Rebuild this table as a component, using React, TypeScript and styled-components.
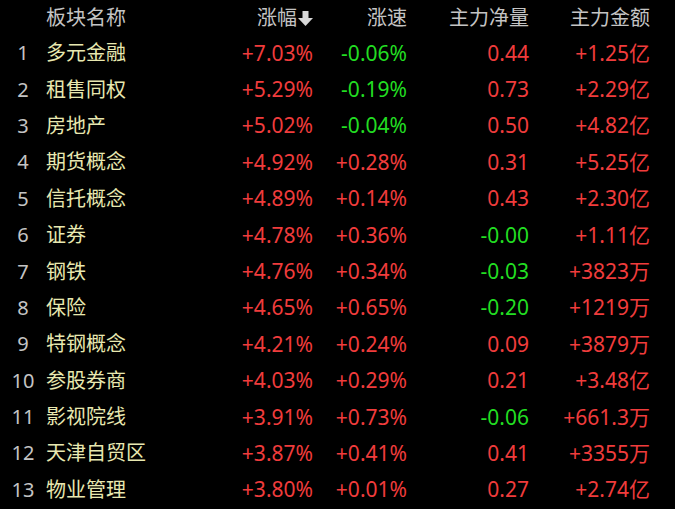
import styled, { createGlobalStyle } from "styled-components";

const GlobalStyle = createGlobalStyle`
  html, body {
    margin: 0;
    padding: 0;
    background: #000;
  }
`;

const Board = styled.div`
  width: 675px;
  height: 509px;
  overflow: hidden;
  background: #000;
  font-family: "Noto Sans", "Noto Sans CJK SC", sans-serif;
  font-size: 20px;
  padding: 1px 25px 0 0;
  box-sizing: border-box;
`;

const Row = styled.div<{ $head?: boolean }>`
  display: grid;
  grid-template-columns: 46px 181px 86px 94px 122px 121px;
  align-items: center;
  height: ${(p) => (p.$head ? "34px" : "36.4px")};
  line-height: 1;
  white-space: nowrap;
`;

const Index = styled.span`
  text-align: center;
  color: #c4c4c4;
`;

const Name = styled.span<{ $head?: boolean }>`
  color: ${(p) => (p.$head ? "#c4c4c4" : "#e8e8b0")};
`;

const Cell = styled.span<{ $tone?: "up" | "down" | "head" }>`
  text-align: right;
  font-size: ${(p) => (p.$tone === "head" ? "20px" : "21px")};
  color: ${(p) =>
    p.$tone === "up" ? "#f03c3c" : p.$tone === "down" ? "#22dd22" : "#c4c4c4"};
`;

const SortArrow = styled.svg`
  width: 15px;
  height: 15px;
  margin-left: 1px;
  vertical-align: -1px;
`;

type Item = [string, string, string, string, string];

const rows: Item[] = [
  ["多元金融", "+7.03%", "-0.06%", "0.44", "+1.25亿"],
  ["租售同权", "+5.29%", "-0.19%", "0.73", "+2.29亿"],
  ["房地产", "+5.02%", "-0.04%", "0.50", "+4.82亿"],
  ["期货概念", "+4.92%", "+0.28%", "0.31", "+5.25亿"],
  ["信托概念", "+4.89%", "+0.14%", "0.43", "+2.30亿"],
  ["证券", "+4.78%", "+0.36%", "-0.00", "+1.11亿"],
  ["钢铁", "+4.76%", "+0.34%", "-0.03", "+3823万"],
  ["保险", "+4.65%", "+0.65%", "-0.20", "+1219万"],
  ["特钢概念", "+4.21%", "+0.24%", "0.09", "+3879万"],
  ["参股券商", "+4.03%", "+0.29%", "0.21", "+3.48亿"],
  ["影视院线", "+3.91%", "+0.73%", "-0.06", "+661.3万"],
  ["天津自贸区", "+3.87%", "+0.41%", "0.41", "+3355万"],
  ["物业管理", "+3.80%", "+0.01%", "0.27", "+2.74亿"],
];

const tone = (v: string) => (v.startsWith("-") ? "down" : "up");

export default function App() {
  return (
    <>
      <GlobalStyle />
      <Board>
        <Row $head>
          <Index />
          <Name $head>板块名称</Name>
          <Cell $tone="head">
            涨幅
            <SortArrow viewBox="0 0 15 15">
              <path d="M4.5 0h6v7h4.5L7.5 15 0 7h4.5z" fill="#d8d8d8" />
            </SortArrow>
          </Cell>
          <Cell $tone="head">涨速</Cell>
          <Cell $tone="head">主力净量</Cell>
          <Cell $tone="head">主力金额</Cell>
        </Row>
        {rows.map(([name, pct, speed, net, amount], i) => (
          <Row key={name}>
            <Index>{i + 1}</Index>
            <Name>{name}</Name>
            <Cell $tone={tone(pct)}>{pct}</Cell>
            <Cell $tone={tone(speed)}>{speed}</Cell>
            <Cell $tone={tone(net)}>{net}</Cell>
            <Cell $tone={tone(amount)}>{amount}</Cell>
          </Row>
        ))}
      </Board>
    </>
  );
}
